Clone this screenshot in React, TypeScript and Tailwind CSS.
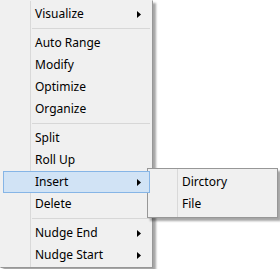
import React from "react";

type Item = { type: "item"; label: string; sub?: boolean; hot?: boolean } | { type: "sep" };

const mainItems: Item[] = [
  { type: "item", label: "Visualize", sub: true },
  { type: "sep" },
  { type: "item", label: "Auto Range" },
  { type: "item", label: "Modify" },
  { type: "item", label: "Optimize" },
  { type: "item", label: "Organize" },
  { type: "sep" },
  { type: "item", label: "Split" },
  { type: "item", label: "Roll Up" },
  { type: "item", label: "Insert", sub: true, hot: true },
  { type: "item", label: "Delete" },
  { type: "sep" },
  { type: "item", label: "Nudge End", sub: true },
  { type: "item", label: "Nudge Start", sub: true },
];

const subItems: Item[] = [
  { type: "item", label: "Dirctory" },
  { type: "item", label: "File" },
];

function Arrow() {
  return (
    <svg width="4" height="7" viewBox="0 0 4 7" className="block">
      <polygon points="0,0 4,3.5 0,7" fill="#000" />
    </svg>
  );
}

function Row({ item }: { item: Item }) {
  if (item.type === "sep") {
    return (
      <div className="h-[7px] flex flex-col">
        <div className="h-[3px]" />
        <div className="h-px ml-[29px] bg-[#d7d7d7]" />
      </div>
    );
  }
  return (
    <div
      className={
        "relative z-10 h-[22px] flex items-center pl-[31px] border " +
        (item.hot ? "bg-[#d1e3f5] border-[#86b5e6]" : "border-transparent")
      }
    >
      <span className="text-[12px] leading-[20px] text-black whitespace-nowrap">{item.label}</span>
      {item.sub && (
        <span className="ml-auto mr-[8px]">
          <Arrow />
        </span>
      )}
    </div>
  );
}

function Menu({ items, className }: { items: Item[]; className: string }) {
  return (
    <div className={"relative bg-[#f0f0f0] px-[2px] shadow-[3px_3px_2px_rgba(0,0,0,0.35)] " + className}>
      <div className="absolute left-[29px] top-0 bottom-0 w-px bg-[#d9d9d9]" />
      <div className="relative flex flex-col">
        {items.map((it, i) => (
          <Row key={i} item={it} />
        ))}
      </div>
    </div>
  );
}

export default function App() {
  return (
    <div className="relative w-[280px] h-[269px] bg-white overflow-hidden font-['Noto_Sans','Segoe_UI',sans-serif]">
      <Menu
        items={mainItems}
        className="w-[153px] border border-[#979797] border-t-[#f0f0f0] border-l-[#f0f0f0] pt-[2px] pb-[1px]"
      />
      <div className="absolute left-[147px] top-[168px]">
        <Menu items={subItems} className="w-[131px] border border-[#979797] py-[2px]" />
      </div>
    </div>
  );
}
